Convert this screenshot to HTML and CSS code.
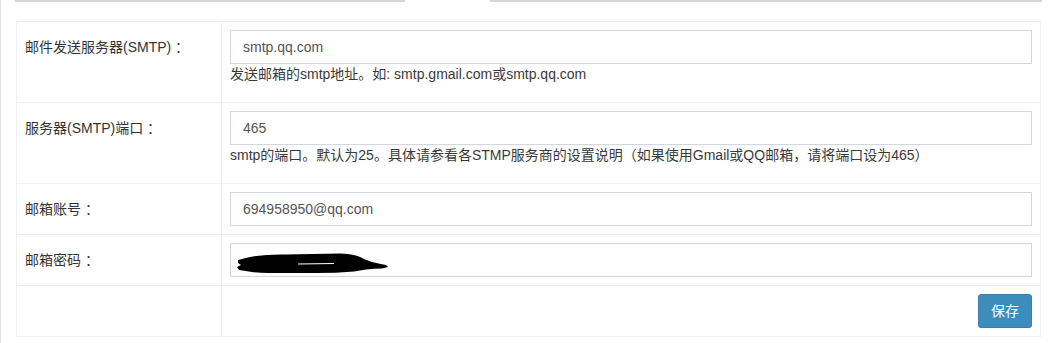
FILE: index.html
```html
<!DOCTYPE html>
<html lang="zh-CN">
<head>
<meta charset="utf-8">
<title>邮件设置</title>
<link rel="stylesheet" href="styles.css">
</head>
<body>
<div class="page">
  <div class="tabs-edge"><span class="seg seg-a"></span><span class="seg seg-b"></span></div>
  <table class="settings">
    <colgroup><col class="col-label"><col></colgroup>
    <tr>
      <td><div class="label">邮件发送服务器(SMTP) ：</div></td>
      <td>
        <input class="field" type="text" value="smtp.qq.com">
        <p class="help">发送邮箱的smtp地址。如: smtp.gmail.com或smtp.qq.com</p>
      </td>
    </tr>
    <tr>
      <td><div class="label">服务器(SMTP)端口 ：</div></td>
      <td>
        <input class="field" type="text" value="465">
        <p class="help">smtp的端口。默认为25。具体请参看各STMP服务商的设置说明（如果使用Gmail或QQ邮箱，请将端口设为465）</p>
      </td>
    </tr>
    <tr>
      <td><div class="label">邮箱账号 ：</div></td>
      <td><input class="field" type="text" value="694958950@qq.com"></td>
    </tr>
    <tr>
      <td><div class="label">邮箱密码 ：</div></td>
      <td>
        <div class="masked">
          <input class="field" type="text" value="">
          <svg class="scribble" width="160" height="24" viewBox="0 0 160 24">
            <path d="M2 7 L14 4 Q30 1 50 1.5 L104 0.5 Q120 1 128 6 L136 9 Q144 11 150 12 L152 14 L146 15.5 Q138 15.5 130 16.5 L118 18.5 Q100 20 80 20 L50 20 Q30 20 16 19 L3 17 L1 14 L5 12 L2 10 Z" fill="#000"/>
            <path d="M62 11 L98 10.5" stroke="#fff" stroke-width="1.2"/>
          </svg>
        </div>
      </td>
    </tr>
    <tr>
      <td></td>
      <td class="actions"><button class="btn" type="button">保存</button></td>
    </tr>
  </table>
</div>
</body>
</html>
```

FILE: styles.css
```css
html, body {
  margin: 0;
  padding: 0;
  background: #fff;
}

body {
  font-family: "Liberation Sans", "Noto Sans CJK SC", sans-serif;
  font-size: 14px;
  line-height: 20px;
  color: #333;
}

.page {
  border-left: 1px solid #e2e2e2;
  height: 343px;
  box-sizing: border-box;
}

.tabs-edge {
  display: flex;
  height: 2px;
  padding-left: 14px;
  gap: 85px;
}

.seg {
  display: block;
  height: 2px;
  background: #d6d6d6;
}

.seg-a { width: 390px; }
.seg-b { width: 552px; }

.settings {
  margin: 19px 0 0 15px;
  width: 1025px;
  border-collapse: collapse;
  table-layout: fixed;
  border: 1px solid #efefef;
}

.col-label { width: 205px; }

.settings td {
  border: 1px solid #efefef;
  padding: 8px;
  vertical-align: top;
}

.label {
  padding-top: 7px;
  color: #333;
  white-space: nowrap;
}

.field {
  display: block;
  width: 100%;
  height: 34px;
  box-sizing: border-box;
  margin: 0;
  padding: 6px 12px;
  border: 1px solid #d2d6de;
  border-radius: 0;
  font-family: "Liberation Sans", "Noto Sans CJK SC", sans-serif;
  font-size: 14px;
  color: #555;
  background: #fff;
  outline: none;
}

.help {
  margin: 0 0 10px;
  color: #3a3a3a;
  white-space: nowrap;
}

.masked {
  position: relative;
}

.scribble {
  position: absolute;
  left: 6px;
  top: 10px;
}

.actions {
  text-align: right;
}

.btn {
  display: inline-block;
  height: 34px;
  padding: 6px 12px;
  box-sizing: border-box;
  border: 1px solid #367fa9;
  border-radius: 3px;
  background: #3c8dbc;
  color: #fff;
  font-family: "Liberation Sans", "Noto Sans CJK SC", sans-serif;
  font-size: 14px;
  line-height: 20px;
  cursor: pointer;
}
```
